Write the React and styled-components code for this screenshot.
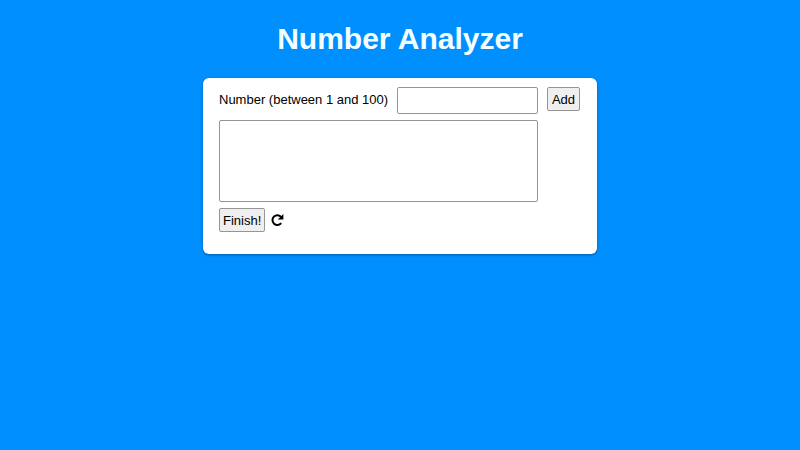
import React, { useState } from "react";
import styled, { createGlobalStyle } from "styled-components";

const GlobalStyle = createGlobalStyle`
  *, *::before, *::after { box-sizing: border-box; }
  body {
    margin: 0;
    background: #008fff;
    color: #000;
    font: 13px/16px "Liberation Sans", Arial, sans-serif;
  }
`;

const Page = styled.main`
  display: flex;
  flex-direction: column;
  align-items: center;
  gap: 21px;
  padding: 21px 16px;
`;

const Title = styled.h1`
  margin: 0;
  color: #f4ffff;
  font-size: 30px;
  line-height: 36px;
  font-weight: bold;
`;

const Card = styled.section`
  width: 100%;
  max-width: 394px;
  padding: 9px 16px 22px;
  background: #fff;
  border-radius: 6px;
  box-shadow: 0 1px 3px rgba(0, 0, 0, 0.35);
`;

const Form = styled.form`
  display: grid;
  grid-template-columns: auto minmax(0, 1fr) auto;
  column-gap: 9px;
  row-gap: 6px;
  padding-right: 1px;
`;

const Label = styled.label`
  padding-top: 5px;
`;

const NumberInput = styled.input`
  width: 100%;
  min-width: 0;
  height: 27px;
  padding: 2px 4px;
  border: 1px solid #959595;
  border-radius: 2px;
  background: #fff;
  font: inherit;
  appearance: textfield;
  &::-webkit-inner-spin-button { appearance: none; }
`;

const NumberList = styled.select`
  grid-column: 1 / 3;
  width: 100%;
  height: 82px;
  border: 1px solid #959595;
  border-radius: 2px;
  background: #fff;
  font: inherit;
`;

const Button = styled.button`
  align-self: start;
  min-width: 33px;
  height: 24px;
  padding: 1px 3px 0;
  border: 1px solid #959595;
  border-radius: 2px;
  background: #efefef;
  color: #000;
  font: inherit;
`;

const Actions = styled.div`
  display: flex;
  align-items: center;
  gap: 6px;
  margin-top: 6px;
`;

const ResetButton = styled.button`
  display: flex;
  padding: 0;
  border: 0;
  background: none;
  color: #000;
`;

export default function App() {
  const [value, setValue] = useState("");
  const [numbers, setNumbers] = useState([]);

  const add = (event) => {
    event.preventDefault();
    const n = Number(value);
    if (n >= 1 && n <= 100 && !numbers.includes(n)) {
      setNumbers([...numbers, n]);
      setValue("");
    }
  };

  return (
    <>
      <GlobalStyle />
      <Page>
        <Title>Number Analyzer</Title>
        <Card>
          <Form onSubmit={add} noValidate>
            <Label htmlFor="number">Number (between 1 and 100)</Label>
            <NumberInput
              id="number"
              type="number"
              min="1"
              max="100"
              value={value}
              onChange={(event) => setValue(event.target.value)}
            />
            <Button type="submit">Add</Button>
            <NumberList size="5" aria-label="Added numbers">
              {numbers.map((n) => (
                <option key={n}>{n}</option>
              ))}
            </NumberList>
          </Form>
          <Actions>
            <Button type="button">Finish!</Button>
            <ResetButton type="button" aria-label="Reset" onClick={() => setNumbers([])}>
              <svg width="13" height="14" viewBox="0 0 13 14" aria-hidden="true">
                <path
                  d="M10.2 4A4.9 4.9 0 1 0 10.2 10.1"
                  fill="none"
                  stroke="currentColor"
                  strokeWidth="2"
                />
                <path d="M12.4 1V6.6H6.8Z" fill="currentColor" />
              </svg>
            </ResetButton>
          </Actions>
        </Card>
      </Page>
    </>
  );
}
